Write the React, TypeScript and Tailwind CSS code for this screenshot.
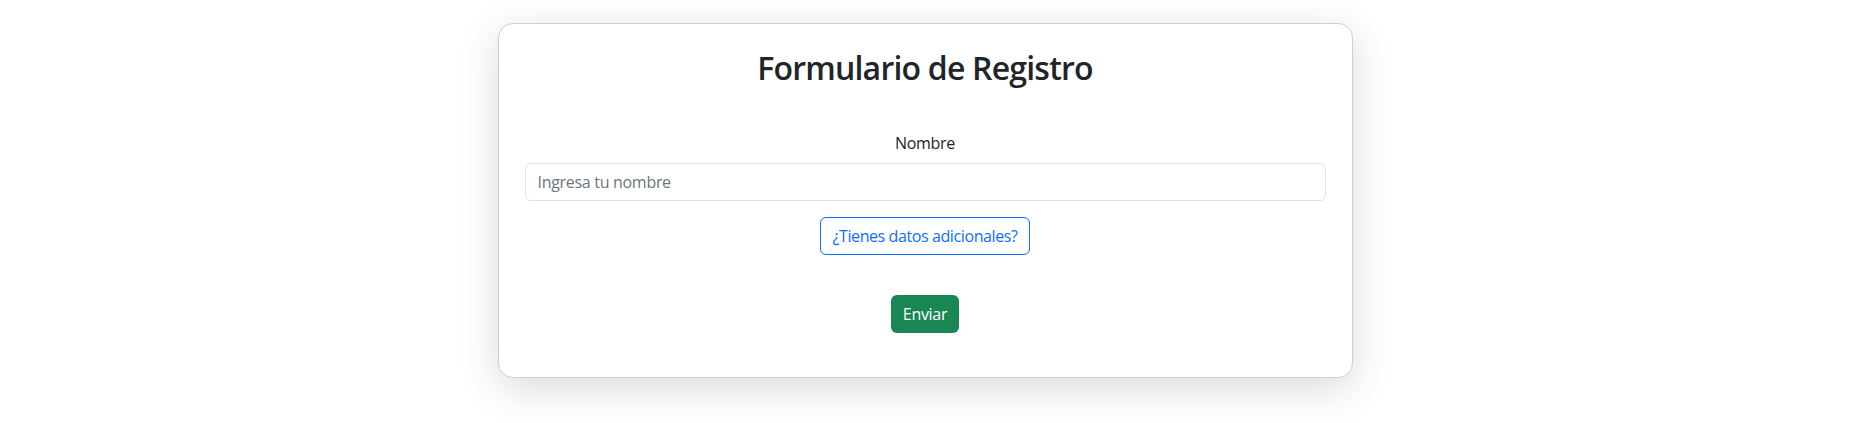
import React from "react";

export default function App() {
  return (
    <div
      className="min-h-[423px] bg-white pt-[23px] text-[#212529]"
      style={{ fontFamily: '"Open Sans", "Noto Sans", sans-serif' }}
    >
      <div className="mx-auto w-[855px] rounded-[15px] border border-[#cfcfcf] bg-white px-[26px] pt-[25px] pb-[44px] shadow-[0_10px_40px_rgba(0,0,0,0.15)]">
        <h2 className="text-center text-[32px] font-semibold leading-[1.2] tracking-[-0.8px]">
          Formulario de Registro
        </h2>
        <form className="mt-[44px] flex flex-col items-center">
          <label className="mb-[8px] text-[16px] leading-[24px] tracking-[-0.3px]">Nombre</label>
          <input
            type="text"
            placeholder="Ingresa tu nombre"
            className="h-[38px] w-full rounded-[6px] border border-[#dee2e6] px-[12px] text-[16px] tracking-[-0.3px] text-[#212529] outline-none placeholder:text-[#6c757d]"
          />
          <button
            type="button"
            className="mt-[16px] h-[38px] rounded-[6px] border border-[#0d6efd] bg-white px-[11px] text-[16px] tracking-[-0.4px] text-[#0d6efd]"
          >
            ¿Tienes datos adicionales?
          </button>
          <button
            type="button"
            className="mt-[40px] h-[38px] rounded-[6px] bg-[#198754] px-[12px] text-[16px] tracking-[-0.3px] text-white"
          >
            Enviar
          </button>
        </form>
      </div>
    </div>
  );
}
